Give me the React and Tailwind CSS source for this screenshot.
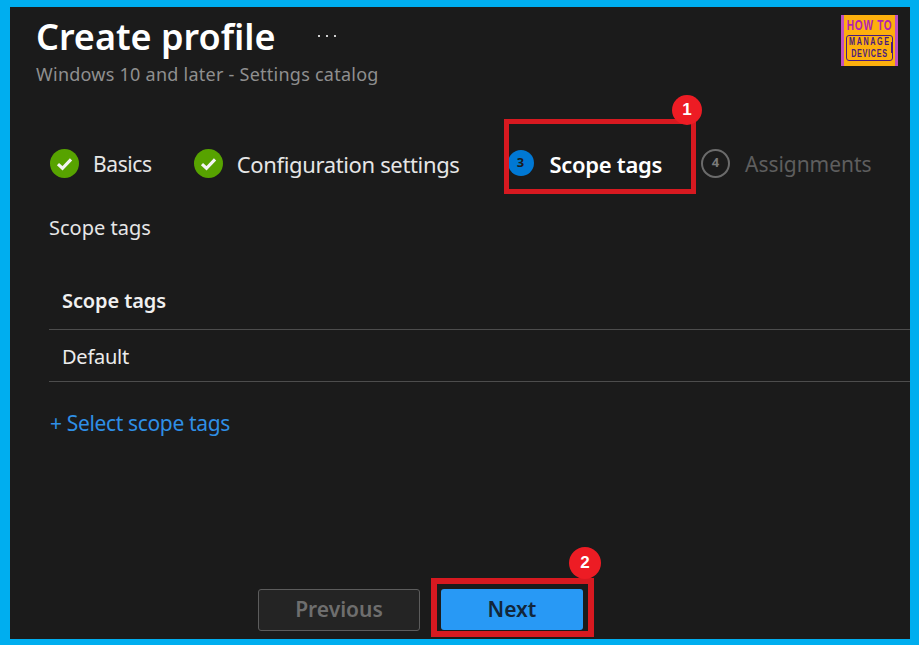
import React from "react";

function CheckStep({ label, textClass }) {
  return (
    <div className="flex items-center">
      <span className="w-[29px] h-[29px] rounded-full bg-[#57a300] flex items-center justify-center">
        <svg width="19" height="19" viewBox="0 0 16 16" fill="none">
          <path d="M2.5 8.5 L6.3 12 L13.5 4.5" stroke="#f4f4f4" strokeWidth="2.6" />
        </svg>
      </span>
      <span className={"ml-[14px] mt-[2px] leading-[28px] text-[#e6e6e6] " + textClass}>{label}</span>
    </div>
  );
}

function Logo() {
  return (
    <div className="absolute left-[831px] top-[8px] w-[57px] h-[51px] bg-[#fdb00d] border-x-[3px] border-[#c04fc0] flex flex-col items-center font-['Liberation_Sans',sans-serif] font-bold">
      <div className="text-[14px] leading-[16px] mt-[2px] text-[#b41fb4] tracking-[1px] scale-x-[0.72] whitespace-nowrap">HOW TO</div>
      <div className="relative mt-[2px] w-[47px] h-[26px] border border-[#4a1a80] rounded-[3px] flex flex-col items-center justify-center text-[#4a1a80] text-[10px] leading-[12px]">
        <div className="scale-x-[0.72] tracking-[2.2px] whitespace-nowrap">MANAGE</div>
        <div className="scale-x-[0.72] tracking-[1px] whitespace-nowrap">DEVICES</div>
        <div className="absolute right-[-1px] top-[6px] w-[2px] h-[11px] bg-[#4a1a80]" />
      </div>
    </div>
  );
}

function Badge({ n, className }) {
  return (
    <div className={"absolute rounded-full bg-[#ed1c24] text-white text-[17px] font-bold flex items-center justify-center font-['Liberation_Sans',sans-serif] " + className}>
      {n}
    </div>
  );
}

export default function App() {
  return (
    <div className="relative w-[919px] h-[645px] overflow-hidden border-solid border-[#00aeef] border-t-[7px] border-b-[6px] border-l-[10px] border-r-[9px] bg-[#1b1b1b] font-['Noto_Sans',sans-serif]">
      {/* header */}
      <div className="pl-[26px] pt-[7px] flex items-center">
        <h1 className="text-[36px] leading-[46px] font-semibold text-white">Create profile</h1>
        <div className="ml-[43px] mt-[-2px] flex gap-[6px]">
          <span className="w-[2px] h-[2px] bg-[#cfcfcf]" />
          <span className="w-[2px] h-[2px] bg-[#cfcfcf]" />
          <span className="w-[2px] h-[2px] bg-[#cfcfcf]" />
        </div>
      </div>
      <div className="pl-[26px] pt-[2px] text-[18px] leading-[24px] text-[#8f8f8f] tracking-[0.25px]">Windows 10 and later - Settings catalog</div>

      {/* steps */}
      <div className="mt-[61px] pl-[40px] flex items-center h-[32px]">
        <CheckStep label="Basics" textClass="text-[21px] tracking-[-0.4px]" />
        <div className="ml-[42px]"><CheckStep label="Configuration settings" textClass="text-[22px] tracking-[-0.35px]" /></div>
        <div className="ml-[48px] flex items-center">
          <span className="w-[26px] h-[26px] rounded-full bg-[#0078d4] text-[#1b1b1b] font-bold text-[13px] flex items-center justify-center">3</span>
          <span className="ml-[16px] mt-[2px] text-[22px] leading-[28px] font-semibold text-white tracking-[-0.3px]">Scope tags</span>
        </div>
        <div className="ml-[39px] flex items-center">
          <span className="w-[29px] h-[29px] rounded-full border-2 border-[#6b6b6b] text-[#7a7a7a] font-bold text-[13px] flex items-center justify-center">4</span>
          <span className="ml-[15px] mt-[2px] text-[21px] leading-[28px] text-[#5e5e5e] tracking-[-0.05px]">Assignments</span>
        </div>
      </div>

      <div className="mt-[35px] pl-[39px] text-[20px] leading-[28px] text-[#e6e6e6]">Scope tags</div>

      {/* table */}
      <div className="mt-[31px] ml-[39px]">
        <div className="h-[57px] flex items-center pl-[13px] border-b border-[#4d4d4d] text-[20px] font-semibold text-[#f0f0f0] tracking-[-0.1px]">Scope tags</div>
        <div className="h-[52px] pt-[3px] flex items-center pl-[13px] border-b border-[#4d4d4d] text-[20px] text-[#ececec] tracking-[-0.25px]">Default</div>
      </div>
      <div className="mt-[27px] pl-[40px] text-[21px] leading-[28px] text-[#2f8fe6] tracking-[-0.35px]">+ Select scope tags</div>

      {/* footer */}
      <div className="absolute left-[248px] top-[582px] flex gap-[21px]">
        <button className="w-[162px] h-[42px] rounded-[3px] border border-[#5c5c5c] bg-[#242424] text-[21px] font-semibold text-[#6e6e6e]">Previous</button>
        <button className="w-[142px] h-[41px] rounded-[3px] bg-[#2899f5] text-[21px] font-semibold text-[#12263a]">Next</button>
      </div>

      {/* annotations */}
      <div className="absolute left-[494px] top-[112px] w-[192px] h-[75px] border-[5px] border-[#d71920]" />
      <Badge n="1" className="w-[30px] h-[30px] left-[662px] top-[88px]" />
      <div className="absolute left-[421px] top-[571px] w-[163px] h-[59px] border-[6px] border-[#d71920]" />
      <Badge n="2" className="w-[32px] h-[32px] left-[559px] top-[540px]" />
      <Logo />
    </div>
  );
}
